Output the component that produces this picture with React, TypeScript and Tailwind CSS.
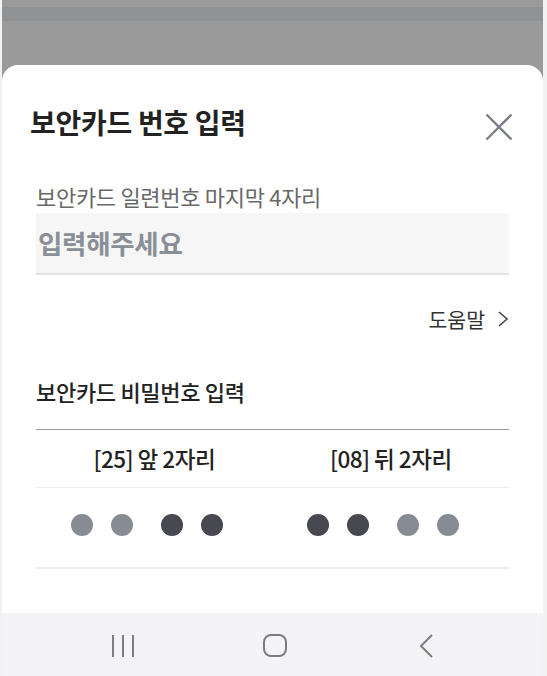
const font = { fontFamily: '"Noto Sans CJK KR", "Noto Sans", sans-serif' };

const Dot = ({ dark }: { dark?: boolean }) => (
  <span className={`block w-[22px] h-[22px] rounded-full ${dark ? "bg-[#474850]" : "bg-[#878c94]"}`} />
);

const DotGroup = ({ pattern }: { pattern: boolean[] }) => (
  <div className="flex items-center justify-center pr-[15px]">
    <div className="flex items-center gap-[18px]">
      <Dot dark={pattern[0]} />
      <Dot dark={pattern[1]} />
    </div>
    <div className="flex items-center gap-[18px] ml-[28px]">
      <Dot dark={pattern[2]} />
      <Dot dark={pattern[3]} />
    </div>
  </div>
);

export default function App() {
  return (
    <div className="w-[547px] h-[676px] bg-[#f2f2f2] flex" style={font}>
      <div className="ml-[2px] w-[541px] h-full flex flex-col bg-[#9a9a9a]">
        {/* dimmed background behind the sheet */}
        <div className="h-[7px] shrink-0" />
        <div className="h-[14px] shrink-0 bg-[#919293]" />
        <div className="h-[44px] shrink-0" />

        {/* bottom sheet */}
        <div className="flex-1 bg-white rounded-t-[16px] flex flex-col">
          <div className="flex items-start justify-between pl-[28px] pr-[30px] mt-[39px]">
            <h1 className="text-[28px] leading-[36px] font-semibold text-[#222222] tracking-[-0.3px]">
              보안카드 번호 입력
            </h1>
            <svg width="28" height="28" viewBox="0 0 28 28" className="mt-[9px]">
              <path d="M1.5 1.5 L26.5 26.5 M26.5 1.5 L1.5 26.5" stroke="#7b7f86" strokeWidth="2.4" />
            </svg>
          </div>

          <div className="px-[34px]">
            <p className="mt-[42px] text-[22px] leading-[26px] text-[#686868] tracking-[-0.3px]">
              보안카드 일련번호 마지막 4자리
            </p>
            <div className="mt-[4px] h-[62px] bg-[#f6f6f7] border-b-2 border-[#e1e3e6] flex items-center pl-[2px]">
              <span className="text-[26.5px] font-bold text-[#8a8f97] tracking-[-0.3px]">입력해주세요</span>
            </div>

            <div className="mt-[31px] flex justify-end items-center h-[26px]">
              <span className="text-[20.5px] leading-[26px] text-[#333333]">도움말</span>
              <svg width="12" height="18" viewBox="0 0 12 18" className="ml-[12px]">
                <path d="M2 2 L10 9 L2 16" fill="none" stroke="#444" strokeWidth="1.6" />
              </svg>
            </div>

            <p className="mt-[45px] text-[22px] leading-[28px] font-medium text-[#222222] tracking-[-0.3px]">
              보안카드 비밀번호 입력
            </p>

            <div className="mt-[24px] border-t border-[#9c9c9c]" />
            <div className="grid grid-cols-2 h-[57px] items-center">
              <span className="text-center text-[22.5px] font-medium text-[#222222] tracking-[-0.5px]">[25] 앞 2자리</span>
              <span className="text-center text-[22.5px] font-medium text-[#222222] tracking-[-0.5px]">[08] 뒤 2자리</span>
            </div>
            <div className="border-t border-[#ececec]" />
            <div className="grid grid-cols-2 h-[79px] items-center pb-[5px]">
              <DotGroup pattern={[false, false, true, true]} />
              <DotGroup pattern={[true, true, false, false]} />
            </div>
            <div className="border-t-2 border-[#ececec]" />
          </div>

          <div className="flex-1" />

          {/* system navigation bar */}
          <div className="h-[63px] bg-[#f4f4f6] flex items-center justify-center gap-[128px] pt-[3px] pl-[4px]">
            <svg width="24" height="24" viewBox="0 0 24 24">
              <path d="M2 1 V23 M12 1 V23 M22 1 V23" stroke="#7d7d7d" strokeWidth="2" />
            </svg>
            <svg width="24" height="24" viewBox="0 0 24 24">
              <rect x="1" y="1" width="22" height="21" rx="7" fill="none" stroke="#7d7d7d" strokeWidth="2" />
            </svg>
            <svg width="24" height="24" viewBox="0 0 24 24">
              <path d="M17 1 L6 12 L17 23" fill="none" stroke="#7d7d7d" strokeWidth="2" />
            </svg>
          </div>
        </div>
      </div>
    </div>
  );
}
